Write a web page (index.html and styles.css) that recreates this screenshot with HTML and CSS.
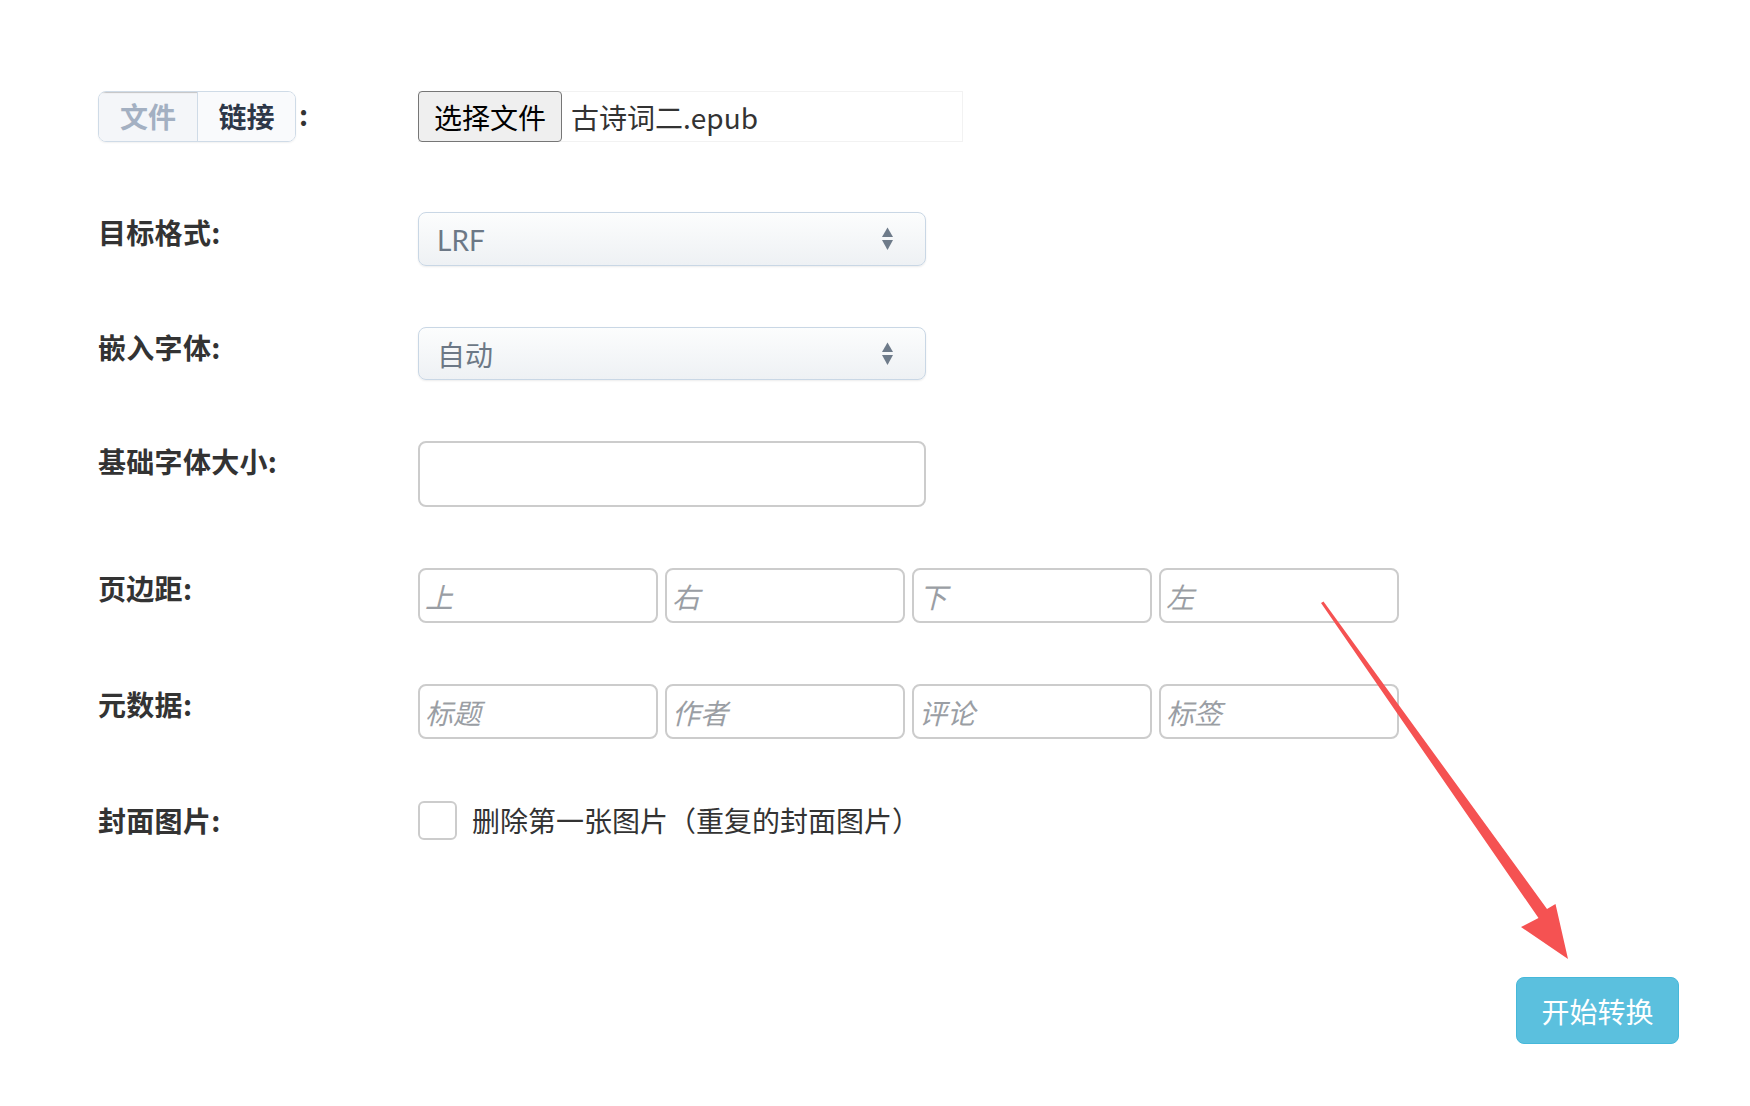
FILE: index.html
```html
<!DOCTYPE html>
<html lang="zh-CN">
<head>
<meta charset="utf-8">
<title>电子书转换</title>
<link rel="stylesheet" href="styles.css">
</head>
<body>
<div class="page">
  <form class="form">
    <div class="row row-file">
      <div class="label-col">
        <div class="tabs">
          <button type="button" class="tab tab-active">文件</button>
          <button type="button" class="tab">链接</button>
        </div>
        <span class="colon">:</span>
      </div>
      <div class="file-box">
        <button type="button" class="file-btn">选择文件</button>
        <span class="file-name">古诗词二.epub</span>
      </div>
    </div>

    <div class="row">
      <label class="label">目标格式:</label>
      <div class="select">
        <span>LRF</span>
        <svg class="caret" width="13" height="26" viewBox="0 0 13 26"><polygon points="1,11 6.5,1.5 12,11" fill="#6e7b8a"/><polygon points="1,14 12,14 6.5,24" fill="#6e7b8a"/></svg>
      </div>
    </div>

    <div class="row">
      <label class="label">嵌入字体:</label>
      <div class="select select-2">
        <span>自动</span>
        <svg class="caret" width="13" height="26" viewBox="0 0 13 26"><polygon points="1,11 6.5,1.5 12,11" fill="#6e7b8a"/><polygon points="1,14 12,14 6.5,24" fill="#6e7b8a"/></svg>
      </div>
    </div>

    <div class="row">
      <label class="label">基础字体大小:</label>
      <input class="text-input" type="text">
    </div>

    <div class="row">
      <label class="label">页边距:</label>
      <div class="quad">
        <input class="small-input" type="text" placeholder="上">
        <input class="small-input" type="text" placeholder="右">
        <input class="small-input" type="text" placeholder="下">
        <input class="small-input" type="text" placeholder="左">
      </div>
    </div>

    <div class="row">
      <label class="label">元数据:</label>
      <div class="quad">
        <input class="small-input" type="text" placeholder="标题">
        <input class="small-input" type="text" placeholder="作者">
        <input class="small-input" type="text" placeholder="评论">
        <input class="small-input" type="text" placeholder="标签">
      </div>
    </div>

    <div class="row">
      <label class="label">封面图片:</label>
      <label class="check">
        <input type="checkbox" class="checkbox">
        <span>删除第一张图片（重复的封面图片）</span>
      </label>
    </div>
  </form>

  <div class="actions">
    <button type="button" class="btn-convert">开始转换</button>
  </div>

  <svg class="annotation" width="1750" height="1106" viewBox="0 0 1750 1106">
    <polygon fill="#f55252" points="1321,603 1323.5,601.5 1547,909 1555.5,904 1568,959 1521,927 1538.5,918"/>
  </svg>
</div>
</body>
</html>
```

FILE: styles.css
```css
html, body {
  margin: 0;
  padding: 0;
  background: #ffffff;
}

body {
  font-family: "Noto Sans CJK SC", "Noto Sans", sans-serif;
  color: #333333;
}

.page {
  position: relative;
  width: 1750px;
  height: 1106px;
  box-sizing: border-box;
  padding: 91px 71px 0 98px;
}

.form {
  display: flex;
  flex-direction: column;
  gap: 61px;
}

.row {
  display: flex;
  align-items: flex-start;
}

.row-file {
  margin-bottom: 9px;
}

.label-col {
  width: 320px;
  flex-shrink: 0;
  display: flex;
  align-items: center;
}

.label {
  width: 320px;
  flex-shrink: 0;
  font-weight: 700;
  font-size: 28px;
  line-height: 40px;
  color: #333333;
  letter-spacing: 0.3px;
}

/* tabs */
.tabs {
  display: flex;
  height: 51px;
  box-sizing: border-box;
  border: 1px solid #cfdbe7;
  border-radius: 8px;
  overflow: hidden;
  box-shadow: 0 1px 2px rgba(0, 0, 0, 0.06);
}

.tab {
  width: 98px;
  height: 100%;
  margin: 0;
  padding: 0;
  border: 0;
  font-family: "Noto Sans CJK SC", sans-serif;
  font-weight: 700;
  font-size: 28px;
  line-height: 49px;
  color: #2d3748;
  background: #f9fafc;
}

.tab + .tab {
  border-left: 1px solid #cfdbe7;
}

.tab-active {
  color: #a3b0c2;
  background: #f4f6f9;
  box-shadow: inset 0 2px 1px -1px #c4c4c4;
}

.colon {
  margin-left: 3px;
  font-weight: 700;
  font-size: 28px;
  line-height: 40px;
  color: #333;
  margin-top: -6px;
}

/* file input */
.file-box {
  width: 545px;
  height: 51px;
  box-sizing: border-box;
  border: 1px solid #f2f2f2;
  border-left: 0;
  display: flex;
  align-items: center;
}

.file-btn {
  height: 51px;
  width: 144px;
  box-sizing: border-box;
  margin: 0;
  padding: 0;
  border: 1px solid #767676;
  border-radius: 4px;
  background: #efefef;
  font-family: "Noto Sans CJK SC", sans-serif;
  font-size: 28px;
  color: #000;
  line-height: 48px;
}

.file-name {
  margin-left: 9px;
  font-size: 28px;
  color: #333;
}

/* selects */
.select {
  width: 508px;
  height: 54px;
  box-sizing: border-box;
  border: 1px solid #c9d7e5;
  border-radius: 8px;
  background: linear-gradient(#fcfdfd, #eef1f4);
  box-shadow: 0 1px 2px rgba(0, 0, 0, 0.08);
  display: flex;
  align-items: center;
  justify-content: space-between;
  padding: 0 31px 0 18px;
  font-family: "Lato", "Noto Sans CJK SC", sans-serif;
  font-size: 28px;
  color: #6c7886;
}

.select-2 {
  height: 53px;
}

.select span {
  margin-top: 1px;
}

.caret {
  display: block;
}

/* inputs */
.text-input {
  width: 508px;
  height: 66px;
  box-sizing: border-box;
  margin: 0;
  border: 2px solid #cccccc;
  border-radius: 8px;
  background: #fff;
  padding: 0 8px;
  font-size: 28px;
  font-family: "Noto Sans CJK SC", sans-serif;
}

.quad {
  display: flex;
  gap: 7px;
}

.small-input {
  width: 240px;
  height: 55px;
  box-sizing: border-box;
  margin: 0;
  border: 2px solid #cccccc;
  border-radius: 8px;
  background: #fff;
  padding: 0 5px;
  font-size: 28px;
  font-family: "Noto Sans CJK SC", sans-serif;
}

.small-input::placeholder {
  color: #9a9ea4;
  font-style: italic;
}

/* checkbox */
.check {
  display: flex;
  align-items: center;
  gap: 15px;
  font-size: 28px;
  color: #333;
}

.checkbox {
  appearance: none;
  -webkit-appearance: none;
  width: 39px;
  height: 39px;
  margin: 0;
  box-sizing: border-box;
  border: 2px solid #cccccc;
  border-radius: 6px;
  background: #fff;
}

/* action */
.actions {
  display: flex;
  justify-content: flex-end;
  margin-top: 137px;
}

.btn-convert {
  width: 163px;
  height: 67px;
  box-sizing: border-box;
  margin: 0;
  padding: 0;
  border: 1px solid #46b8da;
  border-radius: 8px;
  background: #5bc0de;
  color: #ffffff;
  font-family: "Noto Sans CJK SC", sans-serif;
  font-size: 28px;
}

.annotation {
  position: absolute;
  left: 0;
  top: 0;
  pointer-events: none;
}
```
